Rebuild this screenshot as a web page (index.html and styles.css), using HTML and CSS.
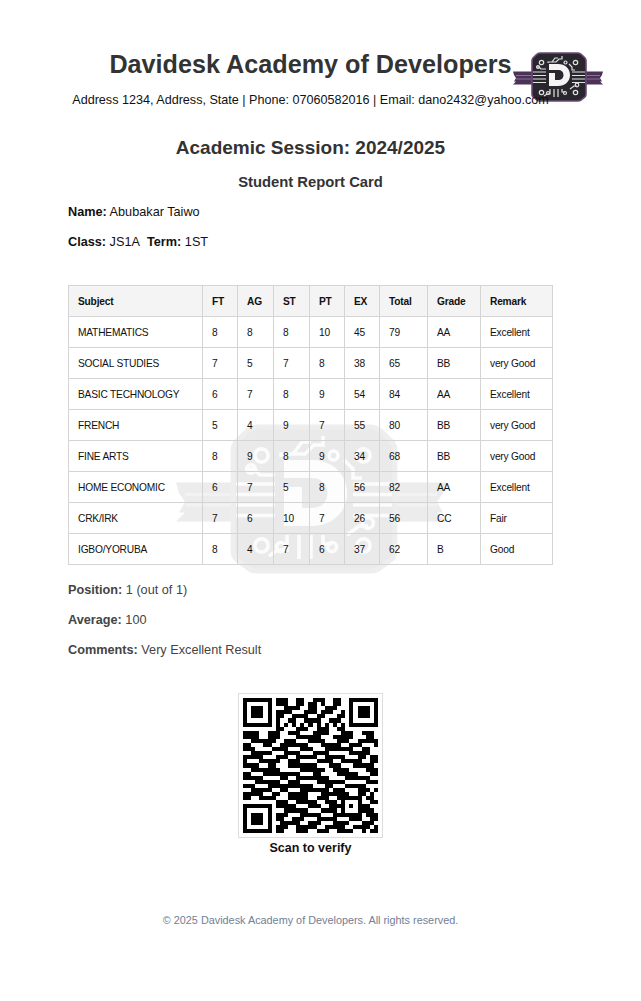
FILE: index.html
```html
<!DOCTYPE html>
<html lang="en">
<head>
<meta charset="utf-8">
<title>Student Report Card</title>
<link rel="stylesheet" href="styles.css">
</head>
<body>
<svg class="defs" width="0" height="0" aria-hidden="true">
  <symbol id="logo" viewBox="0 0 90 50">
    <path d="M0 19.500h21v13h-21l3-3h-2l2-3.500-2-3-1-3.500z" fill="#4d3258"/>
    <path d="M90 19.500h-21v13h21l-3-3h2l-2-3.500 2-3 1-3.500z" fill="#4d3258"/>
    <path d="M3 23.500h18M3 27h18M70 23.500h17M70 27h17" stroke="#8a6f94" stroke-width="1" fill="none"/>
    <path d="M27 1h38q2 0 4 2l3 3q1 1 1 3v33q0 2-1 3l-4 3q-1 1-3 1h-38q-2 0-3-1l-4-3q-1-1-1-3v-33q0-2 1-3l3-3q2-2 4-2z" fill="#2a262e" stroke="#6a4a78" stroke-width="1.600"/>
    <g fill="none" stroke="#e2e2e2" stroke-width="1.200">
      <path d="M20 20h13M20 23.500h13M20 27h13M20 30.500h13M59 20h13M59 23.500h13M59 27h13M59 30.500h13"/>
      <path d="M35 11v-1h4l3-4h3M39 10h4l3-3h3v-3M33 17h-5l-2-2h-3"/>
      <path d="M37 37v5h-3l-3 2M41 37v8M45 37v8M49 37v3h3M57 37l4-3h3M56 12l3 3v3h3"/>
      <circle cx="28.500" cy="10.500" r="2.200"/>
      <circle cx="25" cy="15" r="1.400"/>
      <circle cx="52.500" cy="10.500" r="1.500"/>
      <circle cx="62.500" cy="10.500" r="2.200"/>
      <circle cx="64" cy="33" r="1.800"/>
      <circle cx="28.500" cy="40.500" r="2.200"/>
      <circle cx="35" cy="41" r="1.500"/>
      <circle cx="52" cy="41" r="1.500"/>
      <circle cx="62.500" cy="40.500" r="2.200"/>
    </g>
    <path d="M36 12h9c7 0 12 4.500 12 11s-5 11-12 11h-9v-13h6v7h3c3.500 0 5.500-2 5.500-5s-2-5-5.500-5h-9z" fill="#f4f4f4"/>
  </symbol>
</svg>
<svg class="watermark" aria-hidden="true"><use href="#logo"/></svg>
<main class="page">
  <header class="letterhead">
    <h1 class="school">Davidesk Academy of Developers</h1>
    <svg class="logo" aria-hidden="true"><use href="#logo"/></svg>
    <p class="address">Address 1234, Address, State | Phone: 07060582016 | Email: dano2432@yahoo.com</p>
  </header>
  <h2 class="session">Academic Session: 2024/2025</h2>
  <h3 class="doc-title">Student Report Card</h3>
  <p class="info"><b>Name:</b> Abubakar Taiwo</p>
  <p class="info"><b>Class:</b> JS1A&nbsp; <b>Term:</b> 1ST</p>
  <table class="marks">
    <colgroup>
      <col class="c-subject"><col class="c-ft"><col class="c-ag"><col class="c-st"><col class="c-pt"><col class="c-ex"><col class="c-total"><col class="c-grade"><col class="c-remark">
    </colgroup>
    <thead>
      <tr><th>Subject</th><th>FT</th><th>AG</th><th>ST</th><th>PT</th><th>EX</th><th>Total</th><th>Grade</th><th>Remark</th></tr>
    </thead>
    <tbody>
      <tr><td>MATHEMATICS</td><td>8</td><td>8</td><td>8</td><td>10</td><td>45</td><td>79</td><td>AA</td><td>Excellent</td></tr>
      <tr><td>SOCIAL STUDIES</td><td>7</td><td>5</td><td>7</td><td>8</td><td>38</td><td>65</td><td>BB</td><td>very Good</td></tr>
      <tr><td>BASIC TECHNOLOGY</td><td>6</td><td>7</td><td>8</td><td>9</td><td>54</td><td>84</td><td>AA</td><td>Excellent</td></tr>
      <tr><td>FRENCH</td><td>5</td><td>4</td><td>9</td><td>7</td><td>55</td><td>80</td><td>BB</td><td>very Good</td></tr>
      <tr><td>FINE ARTS</td><td>8</td><td>9</td><td>8</td><td>9</td><td>34</td><td>68</td><td>BB</td><td>very Good</td></tr>
      <tr><td>HOME ECONOMIC</td><td>6</td><td>7</td><td>5</td><td>8</td><td>56</td><td>82</td><td>AA</td><td>Excellent</td></tr>
      <tr><td>CRK/IRK</td><td>7</td><td>6</td><td>10</td><td>7</td><td>26</td><td>56</td><td>CC</td><td>Fair</td></tr>
      <tr><td>IGBO/YORUBA</td><td>8</td><td>4</td><td>7</td><td>6</td><td>37</td><td>62</td><td>B</td><td>Good</td></tr>
    </tbody>
  </table>
  <section class="summary">
    <p class="stat"><b>Position:</b> 1 (out of 1)</p>
    <p class="stat"><b>Average:</b> 100</p>
    <p class="stat"><b>Comments:</b> Very Excellent Result</p>
  </section>
  <figure class="verify">
    <div class="qr-box"><svg class="qr" viewBox="0 0 33 33" shape-rendering="crispEdges" aria-hidden="true"><path id="qr-path" fill="#000"/></svg></div>
    <figcaption class="verify-label">Scan to verify</figcaption>
  </figure>
  <footer class="foot">© 2025 Davidesk Academy of Developers. All rights reserved.</footer>
</main>
<script src="qr.js"></script>
</body>
</html>
```

FILE: styles.css
```css
* { box-sizing: border-box; }
html, body { margin: 0; padding: 0; background: #fff; }
body {
  position: relative;
  width: 641px;
  height: 1001px;
  overflow: hidden;
  font-family: "Liberation Sans", Arial, sans-serif;
  color: #333;
}
.defs { position: absolute; }
.watermark {
  position: absolute;
  left: 176px;
  top: 424px;
  width: 270px;
  height: 150px;
  opacity: 0.09;
  filter: grayscale(1);
}
.page {
  position: relative;
  width: 485px;
  margin-left: 68px;
  padding-top: 49px;
}
.letterhead { position: relative; text-align: center; }
.school {
  margin: 0;
  font-size: 25.200px;
  line-height: 31px;
  font-weight: 700;
  color: #333;
}
.logo {
  position: absolute;
  left: 445px;
  top: 3px;
  width: 90px;
  height: 50px;
}
.address {
  position: relative;
  margin: 12px -10px 0;
  font-size: 12.600px;
  line-height: 16px;
  color: #111;
}
.session {
  margin: 28px 0 0;
  text-align: center;
  font-size: 19px;
  line-height: 24px;
  font-weight: 700;
}
.doc-title {
  margin: 14px 0 0;
  text-align: center;
  font-size: 14.800px;
  line-height: 17px;
  font-weight: 700;
}
.info {
  margin: 14px 0 0;
  font-size: 12.700px;
  line-height: 16px;
  color: #111;
}
.doc-title + .info { margin-top: 13px; }
.marks {
  width: 484px;
  margin-top: 35px;
  border-collapse: collapse;
  table-layout: fixed;
  font-size: 10.200px;
  letter-spacing: -0.2px;
  color: #111;
}
.c-subject { width: 134px; }
.c-ft { width: 35px; }
.c-ag { width: 36px; }
.c-st { width: 36px; }
.c-pt { width: 35px; }
.c-ex { width: 35px; }
.c-total { width: 48px; }
.c-grade { width: 53px; }
.c-remark { width: 72px; }
.marks th, .marks td {
  height: 31px;
  padding: 0 9px;
  border: 1px solid #d4d4d4;
  text-align: left;
  white-space: nowrap;
}
.marks th { background: #f4f4f4; font-weight: 700; }
.summary { margin-top: 17px; }
.stat {
  margin: 14px 0 0;
  font-size: 12.700px;
  line-height: 16px;
  color: #444;
}
.stat:first-child { margin-top: 0; }
.verify {
  margin: 35px 0 0;
  display: flex;
  flex-direction: column;
  align-items: center;
}
.qr-box {
  width: 145px;
  height: 145px;
  padding: 4px;
  border: 1px solid #ddd;
  background: #fff;
}
.qr { display: block; width: 135px; height: 135px; }
.verify-label {
  margin-top: 2px;
  font-size: 12.500px;
  line-height: 16px;
  font-weight: 700;
  color: #111;
}
.foot {
  margin-top: 57px;
  text-align: center;
  font-size: 10.850px;
  line-height: 14px;
  color: #718096;
}
```

FILE: qr.js
```js
var rows = [
"111111101110011001110011001111111",
"100000101110011011010011001000001",
"101110100011110011001110001011101",
"101110101111000111011100101011101",
"101110101100111100110001101011101",
"100000101001100111100111001000001",
"111111101010101010101010101111111",
"000000001100011100111001100000000",
"111100111001110001111000111001110",
"111100111000011111100011111000110",
"001111110011100011110001110011111",
"110001100111111100011111001110001",
"111000011110001110001111111001100",
"001111100011110001111000001111100",
"111110001110011111001111100011011",
"100011111001110000111100111110011",
"111100110001111111000111000111110",
"001111111000001111110011110000111",
"110001111111110001100001111100011",
"111110000110011111111000011111100",
"000111111001110000111111100000111",
"111000111111111110001100011111000",
"001111100110001111111011100011101",
"111110011001111100011111110011010",
"110011110001111100111001111110110",
"000000001110011111001110100010011",
"111111101111100011100111101011100",
"100000100011111100011110100011110",
"101110101110001111100011111110111",
"101110101100111000111110001110011",
"101110100111110011100011110001110",
"100000101110011111001111100111101",
"111111101100011100111001111001011"
];
var d = "";
rows.forEach(function (row, y) {
  row.replace(/1+/g, function (run, x) {
    d += "M" + x + " " + y + "h" + run.length + "v1h-" + run.length + "z";
    return run;
  });
});
document.getElementById("qr-path").setAttribute("d", d);
```
